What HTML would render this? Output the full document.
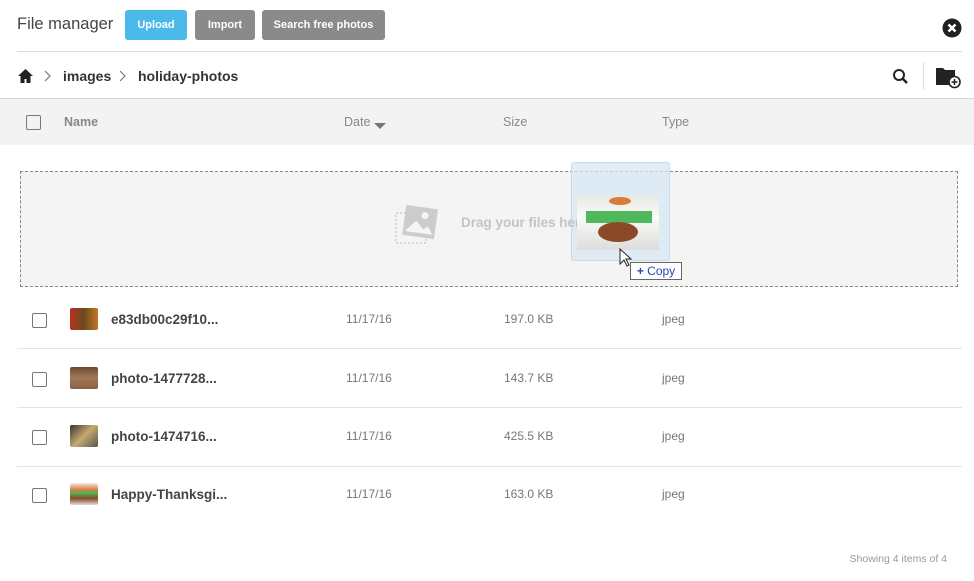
<!DOCTYPE html>
<html><head><style>
body{margin:0;width:974px;height:581px;background:#fff;font-family:"Liberation Sans",sans-serif;position:relative;overflow:hidden;color:#333}
.a{position:absolute}
.btn{position:absolute;top:10px;height:30px;border-radius:3px;color:#fff;font-size:11px;font-weight:bold;line-height:30px;text-align:center}
.cb{position:absolute;width:13px;height:13px;border:1.5px solid #777;border-radius:2px}
.name{position:absolute;left:111px;font-size:13.5px;font-weight:bold;color:#444}
.dt{position:absolute;font-size:12px;color:#777}
.sep{position:absolute;left:17px;width:945px;height:1px;background:#e3e3e3}
.th{position:absolute;top:20px;width:28px;height:22px;border-radius:2px}
</style></head><body>
<div class="a" style="left:17px;top:15px;font-size:16.5px;color:#444">File manager</div>
<div class="btn" style="left:125px;width:62px;background:#4bb9ea">Upload</div>
<div class="btn" style="left:195px;width:60px;background:#8a8a8a">Import</div>
<div class="btn" style="left:262px;width:123px;background:#8a8a8a">Search free photos</div>
<svg class="a" style="left:942px;top:18px" width="20" height="20" viewBox="0 0 20 20"><circle cx="10" cy="10" r="9.5" fill="#222"/><path d="M6.5 6.5L13.5 13.5M13.5 6.5L6.5 13.5" stroke="#fff" stroke-width="2.6"/></svg>
<div class="a" style="left:17px;top:51px;width:945px;height:1px;background:#ddd"></div>
<svg class="a" style="left:17px;top:68px" width="17" height="16" viewBox="0 0 17 16"><path d="M8.5 1L1 8h2.5v7h4v-4h2v4h4V8H16z" fill="#222"/></svg>
<svg class="a" style="left:44px;top:70px" width="8" height="12"><path d="M1 1l5 5-5 5" fill="none" stroke="#777" stroke-width="1.2"/></svg>
<div class="a" style="left:63px;top:68px;font-size:14px;font-weight:bold;color:#333">images</div>
<svg class="a" style="left:119px;top:70px" width="8" height="12"><path d="M1 1l5 5-5 5" fill="none" stroke="#777" stroke-width="1.2"/></svg>
<div class="a" style="left:138px;top:68px;font-size:14px;font-weight:bold;color:#333">holiday-photos</div>
<svg class="a" style="left:892px;top:68px" width="17" height="17" viewBox="0 0 17 17"><circle cx="7" cy="7" r="5" fill="none" stroke="#222" stroke-width="2"/><path d="M10.5 10.5L15 15" stroke="#222" stroke-width="2.4"/></svg>
<div class="a" style="left:923px;top:62px;width:1px;height:28px;background:#ddd"></div>
<svg class="a" style="left:936px;top:67px" width="25" height="22" viewBox="0 0 25 22"><path d="M0 1h7l2 2h10v7a7 7 0 0 0-6 8H0z" fill="#222"/><circle cx="18.5" cy="15" r="5.5" fill="#fff" stroke="#222" stroke-width="1.6"/><path d="M18.5 12v6M15.5 15h6" stroke="#222" stroke-width="1.5"/></svg>
<div class="a" style="left:0;top:98px;width:974px;height:46px;background:#f3f3f3;border-top:1px solid #d8d8d8"></div>
<div class="cb" style="left:26px;top:115px"></div>
<div class="a" style="left:64px;top:115px;font-size:12.5px;font-weight:bold;color:#888">Name</div>
<div class="a" style="left:344px;top:115px;font-size:12.5px;color:#888">Date</div>
<svg class="a" style="left:374px;top:123px" width="12" height="7"><path d="M0 0h12L6 6z" fill="#777"/></svg>
<div class="a" style="left:503px;top:115px;font-size:12.5px;color:#888">Size</div>
<div class="a" style="left:662px;top:115px;font-size:12.5px;color:#888">Type</div>
<div class="a" style="left:20px;top:171px;width:936px;height:114px;background:#f4f4f4;border:1px dashed #888"></div>
<svg class="a" style="left:394px;top:203px" width="50" height="42" viewBox="0 0 50 42"><rect x="2" y="10" width="30" height="30" fill="none" stroke="#bbb" stroke-dasharray="2 2"/><g transform="rotate(8 26 20)"><rect x="10" y="4" width="32" height="30" fill="#ccc"/><path d="M12 30l10-12 8 8 4-4 6 8z" fill="#f4f4f4"/><circle cx="30" cy="12" r="3.5" fill="#f4f4f4"/></g></svg>
<div class="a" style="left:571px;top:162px;width:97px;height:97px;background:rgba(215,232,245,.75);border:1px solid #c7dbea;border-radius:3px"></div>
<div class="a" style="left:461px;top:215px;font-size:13.5px;font-weight:bold;color:#c4c4c4">Drag your files here</div>
<div class="a" style="left:577px;top:195px;width:82px;height:55px;background:linear-gradient(#e8e8e4,#fafaf8 40%,#ddd)"></div>
<div class="a" style="left:586px;top:211px;width:66px;height:12px;background:#4fb85a"></div>
<div class="a" style="left:598px;top:222px;width:40px;height:20px;border-radius:50%;background:#8a4a2a"></div>
<div class="a" style="left:609px;top:197px;width:22px;height:8px;border-radius:50%;background:#d87c3a"></div>
<svg class="a" style="left:619px;top:248px" width="14" height="20"><path d="M1 1v15l4-4 3 6 2-1-3-6h5z" fill="#fff" stroke="#222"/></svg>
<div class="a" style="left:630px;top:262px;width:50px;height:16px;border:1px solid #666;background:#fff;font-size:12px;color:#2646b8;line-height:16px;text-align:center"><b>+</b> Copy</div>
<div class="cb" style="left:32px;top:313px"></div>
<div class="th" style="left:70px;top:308px;background:linear-gradient(90deg,#b83220,#6b4a20,#c4761f)"></div>
<div class="name" style="top:312px">e83db00c29f10...</div>
<div class="dt" style="left:346px;top:312px">11/17/16</div><div class="dt" style="left:504px;top:312px">197.0 KB</div><div class="dt" style="left:662px;top:312px">jpeg</div>
<div class="sep" style="top:348px"></div>
<div class="cb" style="left:32px;top:372px"></div>
<div class="th" style="left:70px;top:367px;background:linear-gradient(#6a4a30,#a3785a,#8a6040)"></div>
<div class="name" style="top:371px">photo-1477728...</div>
<div class="dt" style="left:346px;top:371px">11/17/16</div><div class="dt" style="left:504px;top:371px">143.7 KB</div><div class="dt" style="left:662px;top:371px">jpeg</div>
<div class="sep" style="top:407px"></div>
<div class="cb" style="left:32px;top:430px"></div>
<div class="th" style="left:70px;top:425px;background:linear-gradient(135deg,#333,#c8a870,#555)"></div>
<div class="name" style="top:429px">photo-1474716...</div>
<div class="dt" style="left:346px;top:429px">11/17/16</div><div class="dt" style="left:504px;top:429px">425.5 KB</div><div class="dt" style="left:662px;top:429px">jpeg</div>
<div class="sep" style="top:466px"></div>
<div class="cb" style="left:32px;top:488px"></div>
<div class="th" style="left:70px;top:483px;background:linear-gradient(#eee,#e07a3a 30%,#4fb85a 45%,#8a4a2a 70%,#ddd)"></div>
<div class="name" style="top:487px">Happy-Thanksgi...</div>
<div class="dt" style="left:346px;top:487px">11/17/16</div><div class="dt" style="left:504px;top:487px">163.0 KB</div><div class="dt" style="left:662px;top:487px">jpeg</div>
<div class="a" style="right:27px;top:553px;font-size:10.5px;color:#999">Showing 4 items of 4</div>
</body></html>
